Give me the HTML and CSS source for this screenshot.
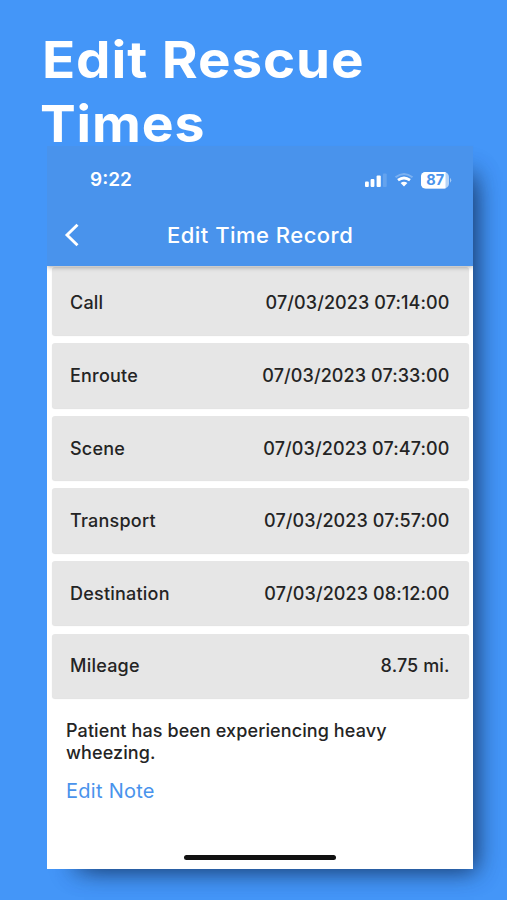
FILE: index.html
```html
<!DOCTYPE html>
<html lang="en">
<head>
<meta charset="utf-8">
<title>Edit Rescue Times</title>
<link rel="stylesheet" href="styles.css">
</head>
<body>
<h1 class="headline"><span class="first">Edit Rescue</span><span class="second">Times</span></h1>
<main class="phone">
  <header class="appbar">
    <div class="status">
      <span class="clock">9:22</span>
      <svg class="indicators" width="88" height="20" viewBox="0 0 88 20" fill="#fff">
        <rect x="1" y="12.500" width="3.800" height="5.500" rx="1"/>
        <rect x="6.600" y="10" width="3.800" height="8" rx="1"/>
        <rect x="12.600" y="6.500" width="4.200" height="11.500" rx="1"/>
        <rect x="18.900" y="4.500" width="3.800" height="13.500" rx="1" opacity=".15"/>
        <g fill="none" stroke="#fff">
          <path d="M31.500 8.300Q40 1.700 48.500 8.300" stroke-width="2" opacity=".28"/>
          <path d="M34 11.200Q40 6.800 46 11.200" stroke-width="2.800"/>
        </g>
        <path d="M36.600 14Q40 11.600 43.400 14L40 17.600Z"/>
        <rect x="57" y="3" width="28" height="16.500" rx="5" opacity=".6"/>
        <path d="M61.500 3H81.500V19.500H61.500A4.500 4.500 0 0 1 57 15V7.500A4.500 4.500 0 0 1 61.500 3Z"/>
        <path d="M86 8.800Q88.500 11.300 86 13.800Z" opacity=".5"/>
        <text class="charge" x="71.300" y="16.400" text-anchor="middle">87</text>
      </svg>
    </div>
    <div class="nav">
      <svg class="back" width="16" height="24" viewBox="0 0 16 24" fill="none" stroke="#fff" stroke-width="2.900"><path d="M13.500 1.800L3 12L13.500 22.200"/></svg>
      <span class="title">Edit Time Record</span>
    </div>
  </header>
  <section class="records">
    <div class="row top"><span>Call</span><time>07/03/2023 07:14:00</time></div>
    <div class="row"><span>Enroute</span><time>07/03/2023 07:33:00</time></div>
    <div class="row"><span>Scene</span><time>07/03/2023 07:47:00</time></div>
    <div class="row"><span>Transport</span><time>07/03/2023 07:57:00</time></div>
    <div class="row"><span>Destination</span><time>07/03/2023 08:12:00</time></div>
    <div class="row"><span>Mileage</span><span>8.75 mi.</span></div>
  </section>
  <p class="note">Patient has been experiencing heavy wheezing.</p>
  <a class="edit">Edit Note</a>
  <div class="home"></div>
</main>
</body>
</html>
```
FILE: styles.css
```css
* { box-sizing: border-box; }
body {
  margin: 0;
  height: 900px;
  overflow: hidden;
  background: #4496f8;
  font-family: Inter, "Liberation Sans", sans-serif;
}
.headline {
  margin: 0;
  padding: 28px 0 0 41px;
  height: 146px;
  color: #fff;
  font-size: 51px;
  line-height: 64px;
  font-weight: 700;
  letter-spacing: .8px;
  position: relative;
  z-index: 1;
}
.headline span { display: block; width: fit-content; transform-origin: 0 50%; }
.first { transform: translateX(1px) scaleX(1.073); }
.second { transform: translateX(-1px) scaleX(1.05); }
.phone {
  display: flex;
  flex-direction: column;
  width: 426px;
  height: 723px;
  margin-left: 47px;
  background: #fff;
  box-shadow: 19px 17px 24px -18px rgba(20, 50, 95, .9), 14px 14px 20px -10px rgba(20, 50, 95, .35);
}
.appbar {
  height: 120px;
  flex: none;
  background: #4993ec;
  color: #fff;
  box-shadow: 0 1px 5px rgba(0, 0, 0, .35);
  clip-path: inset(0 0 -8px 0);
  position: relative;
  z-index: 1;
}
.status {
  display: flex;
  justify-content: space-between;
  align-items: center;
  height: 67px;
  padding: 0 21px 0 43px;
}
.clock { font-size: 19px; font-weight: 600; }
.indicators { margin-bottom: 2px; }
.charge { font: 700 14.500px Inter, sans-serif; fill: #4993ec; }
.nav { display: flex; align-items: center; height: 43px; padding-left: 17px; }
.title { margin-left: 87px; font-size: 22px; font-weight: 500; letter-spacing: .48px; white-space: nowrap; }
.records { display: flex; flex-direction: column; gap: 8.300px; padding: 1px 4.500px 0 5px; }
.row {
  display: flex;
  justify-content: space-between;
  align-items: center;
  height: 64.300px;
  padding: 0 19px 0 18px;
  background: #e6e6e6;
  border-radius: 3px;
  box-shadow: 0 1px 1px rgba(0, 0, 0, .12);
  color: #242424;
  font-size: 18px;
  font-weight: 500;
  letter-spacing: .22px;
}
.top { height: 68px; padding-top: 3px; }
.row time { letter-spacing: .1px; }
.row span + span { letter-spacing: .1px; }
.note {
  margin: 22px 19px 0;
  color: #242424;
  font-size: 18px;
  line-height: 22px;
  font-weight: 500;
  letter-spacing: .1px;
}
.edit { margin: 14px 19px 0; color: #4993ec; font-size: 20px; line-height: 26px; letter-spacing: .27px; }
.home { width: 152px; height: 5px; margin: auto auto 9px 137px; border-radius: 3px; background: #111; }
```
